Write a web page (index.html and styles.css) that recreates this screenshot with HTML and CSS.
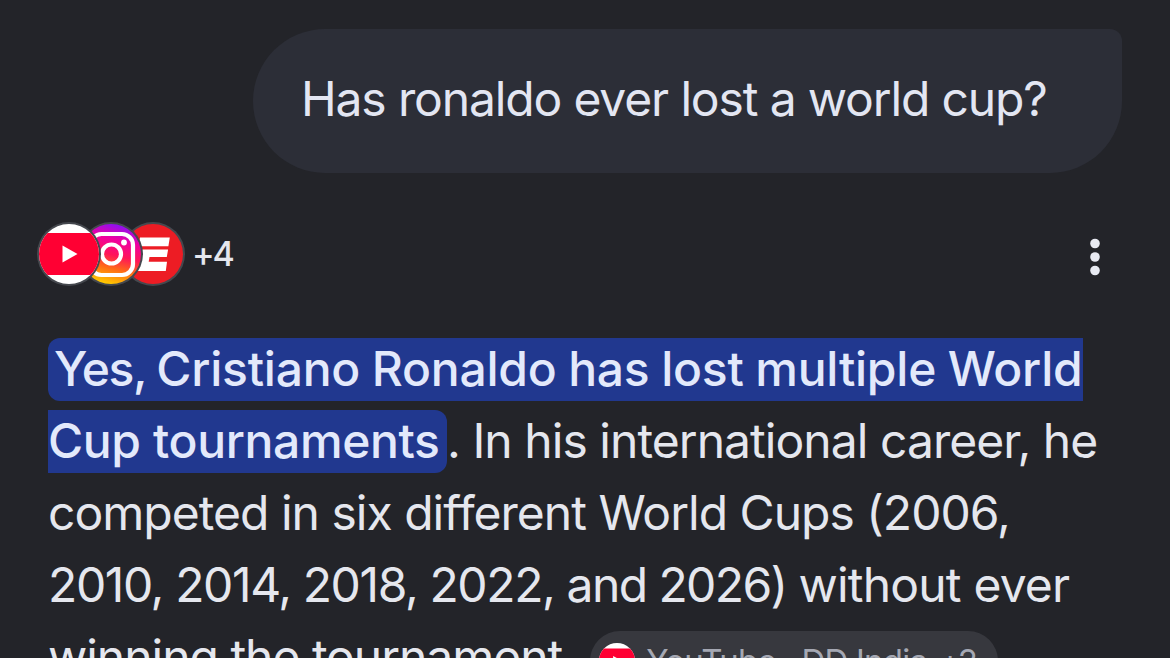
FILE: index.html
```html
<!DOCTYPE html>
<html lang="en">
<head>
<meta charset="utf-8">
<title>Has ronaldo ever lost a world cup?</title>
<link rel="stylesheet" href="styles.css">
</head>
<body>
<main class="page">
  <div class="query"><span class="query-text">Has ronaldo ever lost a world cup?</span></div>
  <div class="sources">
    <div class="source-stack">
      <svg class="source youtube" viewBox="0 0 64 64">
        <defs><clipPath id="disc"><circle cx="32" cy="32" r="30"/></clipPath></defs>
        <circle cx="32" cy="32" r="32" fill="#45484e"/>
        <g clip-path="url(#disc)">
          <path fill="#fff" d="M0 0h64v64H0z"/>
          <rect x="0" y="11" width="64" height="42" rx="4" fill="#ff0033"/>
          <path fill="#fff" d="M25.5 23.5 40.5 32 25.5 40.5z"/>
        </g>
      </svg>
      <svg class="source instagram" viewBox="0 0 64 64">
        <defs>
          <linearGradient id="ig" x1="0.35" y1="1" x2="0.6" y2="0">
            <stop offset="0.03" stop-color="#ffc800"/>
            <stop offset="0.28" stop-color="#ff6b16"/>
            <stop offset="0.5" stop-color="#ff1558"/>
            <stop offset="0.75" stop-color="#f000a0"/>
            <stop offset="1" stop-color="#8a10f5"/>
          </linearGradient>
        </defs>
        <circle cx="32" cy="32" r="32" fill="#45484e"/>
        <circle cx="32" cy="32" r="30" fill="url(#ig)"/>
        <g fill="none" stroke="#fff" stroke-width="4.2">
          <rect x="11.5" y="12" width="42.5" height="41" rx="11"/>
          <circle cx="32.5" cy="32" r="9.5"/>
        </g>
        <circle cx="45" cy="20.5" r="2.9" fill="#fff"/>
      </svg>
      <svg class="source espn" viewBox="0 0 64 64">
        <circle cx="32" cy="32" r="32" fill="#45484e"/>
        <circle cx="32" cy="32" r="30" fill="#ed1c24"/>
        <path fill="#fff" d="M19 15.5h29.8l-1.4 8.7H17.6zM17 27.5h30.1l-1.3 7.4H28.5l-.8 4.8h18.3L44.8 49H14z"/>
      </svg>
    </div>
    <span class="more-count">+4</span>
    <svg class="menu" viewBox="0 0 12 38" fill="#e8eaf2"><circle cx="6" cy="5.5" r="4.8"/><circle cx="6" cy="19" r="4.8"/><circle cx="6" cy="32.5" r="4.8"/></svg>
  </div>
  <div class="answer">
    <div class="line"><strong class="mark mark-start"><span class="lead">Yes, </span>Cristiano Ronaldo has lost multiple World</strong></div>
    <div class="line"><strong class="mark mark-end">Cup tournaments</strong><span class="after-mark">. In his international career, he</span></div>
    <div class="line line-3">competed in six different World Cups (2006,</div>
    <div class="line line-4"><p class="years">2010, 2014, 2018, 2022, <span class="last-year">and 2026) </span><span class="line-tail">without ever</span></p></div>
    <div class="line line-5"><span>winning the tournament.</span>
      <span class="chip">
        <svg class="chip-icon" viewBox="2 2 60 60">
          <g clip-path="url(#disc)">
            <path fill="#fff" d="M0 0h64v64H0z"/>
            <rect x="0" y="11" width="64" height="42" rx="4" fill="#ff0033"/>
            <path fill="#fff" d="M25.5 23.5 40.5 32 25.5 40.5z"/>
          </g>
        </svg>
        <span class="chip-name">YouTube · DD India</span>
        <span class="chip-count">+2</span>
      </span>
    </div>
  </div>
</main>
</body>
</html>
```
FILE: styles.css
```css
* { box-sizing: border-box; }
body {
  margin: 0;
  height: 658px;
  overflow: hidden;
  background: #232429;
  color: #e5e7ee;
  font-family: Inter, "Open Sans", sans-serif;
}
.page {
  display: flex;
  flex-direction: column;
  height: 658px;
  overflow: hidden;
  padding: 29px 48px 0 37px;
}
.query {
  display: flex;
  align-items: center;
  align-self: flex-end;
  width: 869px;
  height: 144px;
  flex: none;
  padding: 0 0 6px 48px;
  border-radius: 72px 12px 72px 72px;
  background: #2c2e37;
  color: #e3e6f2;
  font-size: 48px;
  white-space: nowrap;
}
.query-text { letter-spacing: -1.14px; }
.sources {
  display: flex;
  align-items: center;
  flex: none;
  height: 64px;
  margin-top: 49px;
}
.source-stack { display: flex; margin-left: -0.5px; }
.source { position: relative; width: 64px; height: 64px; }
.source + .source { margin-left: -21.8px; }
.youtube { z-index: 3; }
.instagram { z-index: 2; }
.espn { z-index: 1; }
.more-count {
  margin-left: 7px;
  padding-bottom: 2px;
  font-size: 34px;
  font-weight: 500;
  letter-spacing: -2px;
}
.menu {
  width: 12px;
  height: 38px;
  margin: 6px 21px 0 auto;
}
.answer {
  flex: none;
  margin: 46px 0 0 11px;
  font-size: 48px;
  line-height: 72px;
}
.line {
  display: flex;
  align-items: center;
  height: 72px;
  white-space: nowrap;
}
.mark {
  height: 63px;
  line-height: 61px;
  margin-top: 2px;
  background: #21388f;
  color: #e3e9fb;
  font-weight: 500;
}
.mark-start {
  width: 1035px;
  padding-left: 6px;
  border-radius: 12px 0 0 12px;
  letter-spacing: -0.24px;
  word-spacing: -0.8px;
}
.lead { letter-spacing: -1.4px; }
.mark-end {
  width: 399px;
  border-radius: 0 12px 12px 0;
  letter-spacing: -0.37px;
}
.after-mark {
  padding-top: 2px;
  letter-spacing: -0.95px;
}
.line-3 { padding-top: 2px; letter-spacing: -0.98px; }
.line-4 { padding-top: 2px; letter-spacing: -1.38px; }
.years { margin: 0; }
.last-year { letter-spacing: -1.6px; }
.line-tail { letter-spacing: -0.8px; }
.line-5 { padding-top: 2px; letter-spacing: -1.02px; }
.chip {
  display: flex;
  align-items: center;
  width: 408px;
  height: 60px;
  margin: 8px 0 0 15px;
  padding-left: 9px;
  border-radius: 30px;
  background: #37383e;
  color: #a5a8b3;
  font-size: 33px;
  letter-spacing: -0.8px;
}
.chip-icon { width: 36px; height: 36px; margin-right: 11px; }
.chip-count { margin-left: 12px; letter-spacing: -2px; }
```
